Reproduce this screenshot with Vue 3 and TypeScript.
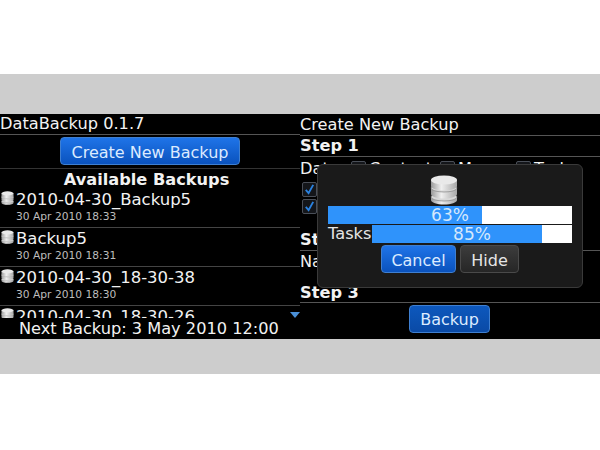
<script setup lang="ts">
interface Backup {
  name: string
  date: string
}

const backups: Backup[] = [
  { name: '2010-04-30_Backup5', date: '30 Apr 2010 18:33' },
  { name: 'Backup5', date: '30 Apr 2010 18:31' },
  { name: '2010-04-30_18-30-38', date: '30 Apr 2010 18:30' },
  { name: '2010-04-30_18-30-26', date: '30 Apr 2010 18:30' },
]

const dataTypes = ['Contacts', 'Memos', 'Tasks']
const total = 63
const tasks = 85
</script>

<template>
  <div class="page">
    <svg class="defs" width="0" height="0">
      <defs>
        <linearGradient id="disk" x1="0" x2="1" y1="0" y2="0">
          <stop offset="0" stop-color="#9a9a9a" />
          <stop offset="0.4" stop-color="#efefef" />
          <stop offset="1" stop-color="#a8a8a8" />
        </linearGradient>
        <symbol id="db" viewBox="0 0 28 30">
          <path d="M1 22v3c0 2.500 6 4.500 13 4.500s13-2 13-4.500v-3z" fill="url(#disk)" />
          <ellipse cx="14" cy="22" rx="13" ry="4" fill="#d8d8d8" stroke="#777" stroke-width=".6" />
          <path d="M1 13v6c0 2.500 6 4.500 13 4.500s13-2 13-4.500v-6z" fill="url(#disk)" />
          <ellipse cx="14" cy="13" rx="13" ry="4" fill="#d8d8d8" stroke="#777" stroke-width=".6" />
          <path d="M1 5v6c0 2.500 6 4.500 13 4.500s13-2 13-4.500V5z" fill="url(#disk)" />
          <ellipse cx="14" cy="5" rx="13" ry="4.500" fill="#e9e9e9" />
        </symbol>
      </defs>
    </svg>

    <div class="band"></div>

    <div class="screens">
      <section class="panel">
        <div class="title">DataBackup 0.1.7</div>
        <div class="create-row">
          <button class="btn create">Create New Backup</button>
        </div>
        <div class="heading">Available Backups</div>
        <div class="list">
          <div v-for="b in backups" :key="b.name" class="backup">
            <svg class="row-icon"><use href="#db" /></svg>
            <div>
              <div class="name">{{ b.name }}</div>
              <div class="date">{{ b.date }}</div>
            </div>
          </div>
          <svg class="more" viewBox="0 0 10 6"><path d="M0 0h10L5 6z" fill="#4a90d8" /></svg>
        </div>
        <div class="next">Next Backup: 3 May 2010 12:00</div>
      </section>

      <section class="panel right">
        <div class="title step-title">Create New Backup</div>
        <div class="step">Step 1</div>
        <div class="data-row">
          <span class="data-label">Data:</span>
          <span v-for="t in dataTypes" :key="t" class="data-type">
            <i class="box"></i><span>{{ t }}</span>
          </span>
        </div>
        <div class="checks">
          <i class="box checked">
            <svg viewBox="0 0 14 14"><path d="M3 7.500l3 3.500 5-9" fill="none" stroke="#2a82e0" stroke-width="2" /></svg>
          </i>
          <i class="box checked">
            <svg viewBox="0 0 14 14"><path d="M3 7.500l3 3.500 5-9" fill="none" stroke="#2a82e0" stroke-width="2" /></svg>
          </i>
        </div>
        <div class="step step-two">Step 2</div>
        <div class="name-row">Name</div>
        <div class="step step-three">Step 3</div>
        <div class="backup-row">
          <button class="btn backup-btn">Backup</button>
        </div>

        <div class="popup">
          <svg class="popup-icon"><use href="#db" /></svg>
          <div class="bar">
            <div class="fill" :style="{ width: total + '%' }"></div>
            <span class="pct">{{ total }}%</span>
          </div>
          <div class="task-row">
            <span class="task-label">Tasks</span>
            <div class="bar task-bar">
              <div class="fill" :style="{ width: tasks + '%' }"></div>
              <span class="pct">{{ tasks }}%</span>
            </div>
          </div>
          <div class="actions">
            <button class="btn cancel">Cancel</button>
            <button class="btn hide">Hide</button>
          </div>
        </div>
      </section>
    </div>

    <div class="band"></div>
  </div>
</template>

<style scoped>
.page {
  width: 600px;
  height: 450px;
  padding-top: 74px;
  box-sizing: border-box;
  background: #fff;
  font-family: "DejaVu Sans", sans-serif;
  color: #f2f2f2;
  overflow: hidden;
}

.defs {
  position: absolute;
}

.band {
  height: 40px;
  background: #cdcdcd;
}

.band:last-child {
  height: 35px;
}

.screens {
  display: flex;
  height: 225px;
  background: #000;
}

.panel {
  position: relative;
  width: 300px;
  height: 225px;
  overflow: hidden;
}

.title {
  height: 20px;
  font-size: 16.2px;
  line-height: 20px;
  border-bottom: 1px solid #555;
}

.create-row {
  display: flex;
  justify-content: center;
  height: 34px;
  padding-top: 2px;
  box-sizing: border-box;
  border-bottom: 1px solid #333;
}

.btn {
  display: block;
  padding: 3px 0 0;
  border: 1px solid #3f7fd0;
  border-radius: 4px;
  background: linear-gradient(#1f74e8, #0a52bd);
  color: #dcebff;
  font-family: inherit;
  font-size: 16px;
  line-height: 1;
}

.create {
  width: 180px;
  height: 28px;
}

.heading {
  height: 20px;
  padding-right: 7px;
  font-size: 16.2px;
  font-weight: 700;
  line-height: 21px;
  text-align: center;
}

.list {
  position: relative;
  height: 129px;
  overflow: hidden;
}

.backup {
  display: flex;
  gap: 2px;
  height: 38px;
  padding-left: 1px;
  border-bottom: 1px solid #444;
}

.row-icon {
  flex: none;
  width: 13px;
  height: 14px;
  margin-top: 2px;
}

.name {
  font-size: 16.5px;
  line-height: 20px;
  margin-top: 1px;
}

.date {
  font-size: 10.7px;
  line-height: 13px;
  color: #bdbdbd;
}

.more {
  position: absolute;
  right: 0;
  bottom: 0;
  width: 10px;
  height: 6px;
}

.next {
  height: 21px;
  padding-left: 19px;
  font-size: 16.2px;
  line-height: 22px;
}

.step-title {
  height: 21px;
  line-height: 21px;
}

.step {
  height: 20px;
  font-size: 16.2px;
  font-weight: 700;
  line-height: 20px;
  border-bottom: 1px solid #555;
}

.data-row {
  display: flex;
  align-items: center;
  height: 23px;
  font-size: 16.2px;
  white-space: nowrap;
}

.data-label {
  flex: none;
  width: 51px;
}

.data-type {
  display: flex;
  flex: none;
  align-items: center;
  gap: 3px;
  width: 89px;
}

.data-type:nth-child(3) {
  width: 76px;
}

.box {
  display: block;
  flex: none;
  box-sizing: border-box;
  width: 15px;
  height: 15px;
  border: 1px solid #4a4f58;
  border-radius: 2px;
  background: #14161a;
}

.box svg {
  display: block;
  width: 13px;
  height: 13px;
}

.checks {
  display: flex;
  flex-direction: column;
  gap: 2px;
  height: 44px;
  padding: 2px 0 0 2px;
  box-sizing: border-box;
}

.step-two {
  height: 20px;
  margin-top: 6px;
}

.name-row {
  height: 34px;
  font-size: 16.2px;
  line-height: 22px;
}

.step-three {
  height: 17px;
  line-height: 16px;
}

.backup-row {
  display: flex;
  justify-content: center;
  padding: 2px 1px 0 0;
}

.backup-btn {
  width: 81px;
  height: 28px;
  padding-top: 2px;
  background: linear-gradient(#0d58bd, #0a4aa6);
}

.popup {
  position: absolute;
  left: 17px;
  top: 50px;
  display: flex;
  flex-direction: column;
  align-items: center;
  box-sizing: border-box;
  width: 266px;
  height: 124px;
  padding: 10px 10px 0;
  border: 1px solid #3a3a3a;
  border-radius: 6px;
  background: #1a1a1a;
}

.popup-icon {
  flex: none;
  width: 28px;
  height: 30px;
  margin: 0 12px 1px 0;
}

.bar {
  position: relative;
  flex: none;
  width: 244px;
  height: 18px;
  background: #fff;
}

.fill {
  height: 100%;
  background: #2f93fb;
}

.pct {
  position: absolute;
  inset: 0;
  color: #d5e8fb;
  font-size: 17px;
  line-height: 19px;
  text-align: center;
}

.task-row {
  display: flex;
  justify-content: space-between;
  width: 244px;
  margin-top: 1px;
}

.task-label {
  font-size: 16.2px;
  line-height: 18px;
  color: #e6e6e6;
}

.task-bar {
  width: 200px;
}

.actions {
  display: flex;
  gap: 4px;
  margin-top: 2px;
}

.cancel {
  width: 75px;
  height: 28px;
}

.hide {
  width: 59px;
  height: 28px;
  border-color: #4a4a4a;
  background: linear-gradient(#3c3c3c, #262626);
  color: #e6e6e6;
}
</style>
